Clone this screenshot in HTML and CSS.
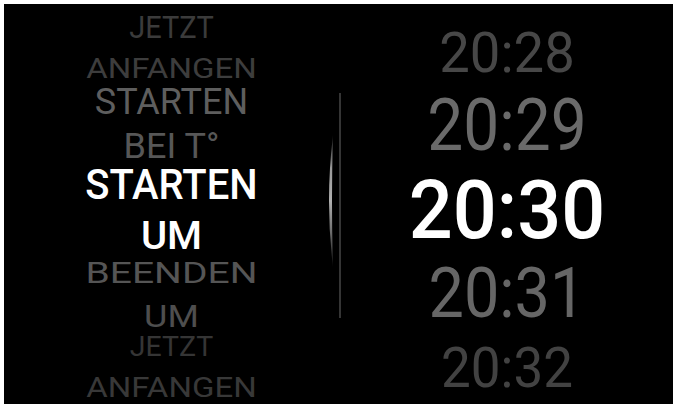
FILE: index.html
```html
<!DOCTYPE html>
<html lang="de">
<head>
<meta charset="utf-8">
<title>Startzeit</title>
<link rel="stylesheet" href="styles.css">
</head>
<body>
<main class="panel">
  <section class="col options">
    <div class="ln o1">JETZT</div>
    <div class="ln o2">ANFANGEN</div>
    <div class="ln o3">STARTEN</div>
    <div class="ln o4">BEI T°</div>
    <div class="ln o5">STARTEN</div>
    <div class="ln o6">UM</div>
    <div class="ln o7">BEENDEN</div>
    <div class="ln o8">UM</div>
    <div class="ln o9">JETZT</div>
    <div class="ln o10">ANFANGEN</div>
  </section>
  <div class="divider">
    <svg class="indicator" viewBox="0 0 10 132" width="10" height="132" aria-hidden="true">
      <defs>
        <linearGradient id="ig" x1="0" y1="0" x2="0" y2="1">
          <stop offset="0" stop-color="#1a1a1a"/>
          <stop offset="0.25" stop-color="#9a9a9a"/>
          <stop offset="0.5" stop-color="#b0b0b0"/>
          <stop offset="0.75" stop-color="#6a6a6a"/>
          <stop offset="1" stop-color="#111"/>
        </linearGradient>
      </defs>
      <path d="M8 0 Q0 66 8 132 Q6 66 8 0 Z" fill="url(#ig)"/>
    </svg>
  </div>
  <section class="col times">
    <div class="ln t1">20:28</div>
    <div class="ln t2">20:29</div>
    <div class="ln t3">20:30</div>
    <div class="ln t4">20:31</div>
    <div class="ln t5">20:32</div>
  </section>
</main>
</body>
</html>
```
FILE: styles.css
```css
html, body {
  margin: 0;
  padding: 0;
  background: #fff;
}
body {
  width: 676px;
  height: 406px;
  overflow: hidden;
  font-family: Roboto, "Liberation Sans", sans-serif;
  font-weight: 400;
}
.panel {
  margin: 4px 3px 2px 4px;
  height: 400px;
  background: #000;
  display: grid;
  grid-template-columns: 335px 2px 1fr;
  overflow: hidden;
}
.col {
  display: flex;
  flex-direction: column;
  align-items: center;
}
.ln {
  height: 20px;
  line-height: 20px;
  white-space: nowrap;
  text-align: center;
  transform-origin: center;
}
/* options column */
.o1 { margin-top: 12.5px; font-size: 29px; transform: scaleY(1.1); color: #3b3b3b; }
.o2 { margin-top: 22px; font-size: 33px; transform: scaleY(0.81); color: #3d3d3d; }
.o3 { margin-top: 13.5px; font-size: 36px; transform: scaleY(1); color: #5e5e5e; }
.o4 { margin-top: 23.5px; font-size: 36px; transform: scaleY(0.98); color: #575757; }
.o5 { margin-top: 19.5px; font-size: 40px; transform: scaleY(1.06); color: #fff; font-weight: 500; }
.o6 { margin-top: 31.5px; font-size: 40px; transform: scaleY(0.95); color: #fff; font-weight: 500; }
.o7 { margin-top: 16px; font-size: 39px; transform: scaleY(0.76); color: #555; }
.o8 { margin-top: 24.5px; font-size: 36px; transform: scaleY(0.86); color: #4e4e4e; }
.o9 { margin-top: 10px; font-size: 28.5px; transform: scaleY(0.98); color: #353535; }
.o10 { margin-top: 21px; font-size: 33px; transform: scaleY(0.85); color: #383838; }

/* divider + scroll indicator */
.divider {
  position: relative;
  align-self: start;
  margin-top: 89px;
  height: 225px;
  background: #353535;
}
.indicator {
  position: absolute;
  left: -14px;
  top: 42px;
  display: block;
}

/* times column */
.t1 { margin-top: 39px; font-size: 54.4px; transform: scaleY(1.03); color: #474747; }
.t2 { margin-top: 53px; font-size: 64px; transform: scaleY(1.14); color: #6a6a6a; }
.t3 { margin-top: 65px; font-size: 77.4px; transform: scaleY(1.05); color: #fff; font-weight: 500; }
.t4 { margin-top: 62px; font-size: 63px; transform: scaleY(1.12); color: #666; }
.t5 { margin-top: 54.5px; font-size: 53px; transform: scaleY(1.03); color: #424242; }
```
